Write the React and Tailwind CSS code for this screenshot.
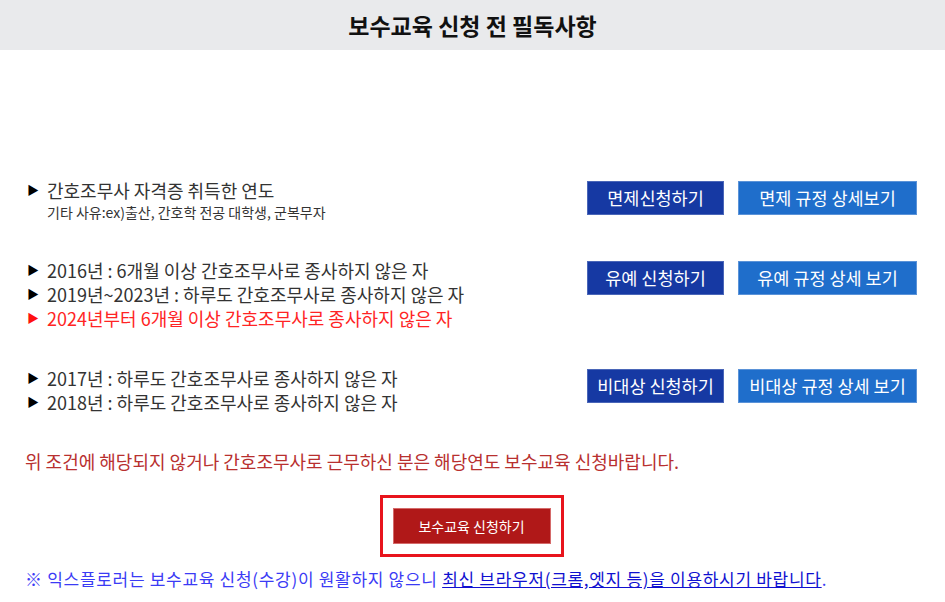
const font = { fontFamily: '"Malgun Gothic", "Noto Sans CJK KR", "Noto Sans", sans-serif' };

const rows = [
  {
    lines: [{ text: "간호조무사 자격증 취득한 연도" }],
    sub: "기타 사유:ex)출산, 간호학 전공 대학생, 군복무자",
    apply: "면제신청하기",
    rule: "면제 규정 상세보기",
  },
  {
    lines: [
      { text: "2016년 : 6개월 이상 간호조무사로 종사하지 않은 자" },
      { text: "2019년~2023년 : 하루도 간호조무사로 종사하지 않은 자" },
      { text: "2024년부터 6개월 이상 간호조무사로 종사하지 않은 자", red: true },
    ],
    apply: "유예 신청하기",
    rule: "유예 규정 상세 보기",
  },
  {
    lines: [
      { text: "2017년 : 하루도 간호조무사로 종사하지 않은 자" },
      { text: "2018년 : 하루도 간호조무사로 종사하지 않은 자" },
    ],
    apply: "비대상 신청하기",
    rule: "비대상 규정 상세 보기",
  },
];

function Row({ row }) {
  return (
    <div className="flex items-start justify-between">
      <div>
        {row.lines.map((l) => (
          <p
            key={l.text}
            className={`flex items-center text-[18px] leading-[24px] ${l.red ? "text-[#ff2424]" : "text-[#333]"}`}
          >
            <span className={`w-[20px] text-[12px] ${l.red ? "text-[#ff1010]" : "text-black"}`}>▶</span>
            {l.text}
          </p>
        ))}
        {row.sub && (
          <p className="pl-[20px] text-[14px] leading-[20px] text-[#333]">{row.sub}</p>
        )}
      </div>
      <div className="mt-[3px] flex gap-[14px]">
        <button className="h-[34px] w-[137px] border border-[#4a66b8] bg-[#1639a3] text-[17.5px] text-white">
          {row.apply}
        </button>
        <button className="h-[34px] w-[179px] border border-[#5b93d8] bg-[#1f6ecb] text-[17.5px] text-white">
          {row.rule}
        </button>
      </div>
    </div>
  );
}

export default function App() {
  return (
    <div className="min-h-screen bg-white" style={font}>
      {/* Header */}
      <header className="flex h-[50px] items-center justify-center bg-[#e9eaec]">
        <h1 className="text-[23px] font-bold text-[#111]">보수교육 신청 전 필독사항</h1>
      </header>

      <main className="pl-[27px] pr-[28px] pt-[128px]">
        <div className="flex flex-col gap-[36px]">
          {rows.map((r) => (
            <Row key={r.apply} row={r} />
          ))}
        </div>

        <p className="mt-[35px] -ml-[2px] text-[18px] leading-[24px] text-[#b8302f]">
          위 조건에 해당되지 않거나 간호조무사로 근무하신 분은 해당연도 보수교육 신청바랍니다.
        </p>

        <div className="mt-[22px] flex justify-center pr-[1px]">
          <div className="border-[3px] border-[#e8141c] p-[10px]">
            <button className="h-[36px] w-[158px] border border-[#d56a6a] bg-[#b01818] text-[14px] text-white">
              보수교육 신청하기
            </button>
          </div>
        </div>

        <p className="-ml-[2px] mt-[11px] text-[17px] leading-[22px] tracking-[0.7px] text-[#3b3bf5]">
          ※ 익스플로러는 보수교육 신청(수강)이 원활하지 않으니{" "}
          <a className="text-[#1010d0] underline">최신 브라우저(크롬,엣지 등)을 이용하시기 바랍니다</a>.
        </p>
      </main>
    </div>
  );
}
